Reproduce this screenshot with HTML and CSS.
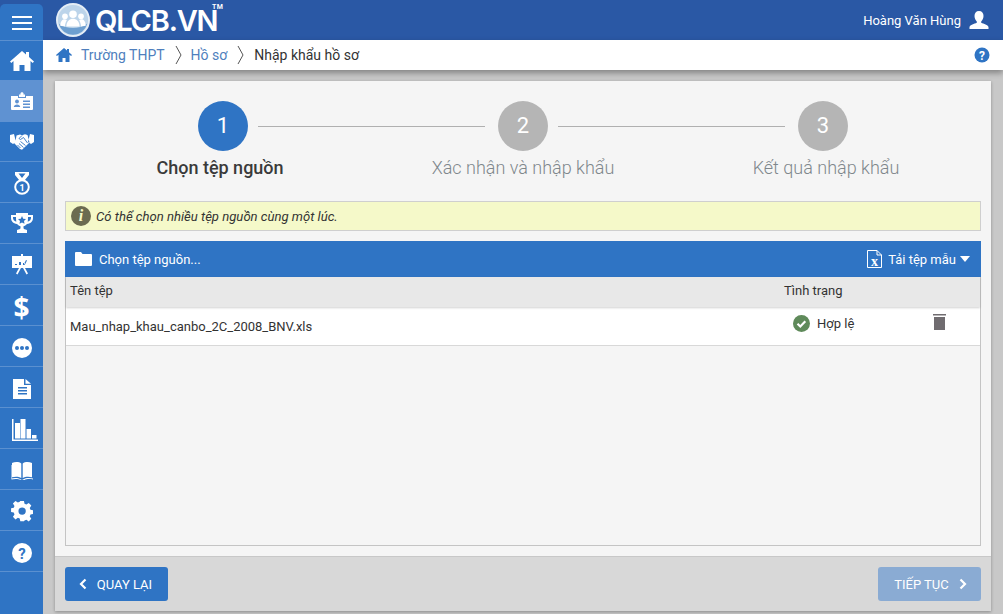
FILE: index.html
```html
<!DOCTYPE html>
<html lang="vi">
<head>
<meta charset="utf-8">
<title>Nhập khẩu hồ sơ</title>
<link rel="stylesheet" href="styles.css">
</head>
<body>
<div class="app">
  <aside class="sidebar">
   <div class="side-list">
    <a class="side-item side-menu"><svg viewBox="0 0 20 14" width="20" height="14"><path d="M0 1h20M0 7h20M0 13h20" stroke="#fff" stroke-width="2"/></svg></a>
    <a class="side-item side-home"><svg viewBox="0 0 24 20" width="24" height="20"><path fill="#fff" d="M12 0 0 10.500l1.300 1.400L3.500 10v10h6v-6h5v6h6V10l2.200 1.900 1.300-1.400-5-4.400V1h-3v2.500z"/></svg></a>
    <a class="side-item active"><svg viewBox="0 0 22 18" width="22" height="18"><path fill="#fff" d="M8 2.500h1.500V1L11 0l1.500 1v1.500H14V5H8zM0 4h7v2h8V4h7v13a1 1 0 0 1-1 1H1a1 1 0 0 1-1-1z"/><circle cx="6" cy="9.500" r="1.900" fill="#5f92d2"/><path fill="#5f92d2" d="M2.800 15c0-3.500 6.400-3.500 6.400 0zM12 8.500h7V10h-7zM12 11.500h7V13h-7zM12 14.500h7V16h-7z"/></svg></a>
    <a class="side-item side-shake"><svg viewBox="0 0 24 17" width="24" height="17"><path fill="#fff" d="M0 2 4 1l2 8-3 2-3-2zM24 2l-4-1-2 8 3 2 3-2zM6.500 2.500 10 1.500l2 .7 3-1 2.500.8 2 7.500-3 3-4.500 4.300-2-.8-6-6 1.500-1.500z"/><path d="M12 2.500 9 5.500l1.500 1 3-2 4 5.500M10.500 8.500l5 4M9 10.500l4.500 4M7.500 12l3 3" fill="none" stroke="#2f74c4" stroke-width=".9"/></svg></a>
    <a class="side-item side-medal"><svg viewBox="0 0 16 23" width="16" height="23"><path fill="#fff" fill-rule="evenodd" d="M1 0h14v3l-4.500 5.500h-5L1 3zm3.500 1.500L8 6l3.500-4.500z"/><circle cx="8" cy="15" r="6.800" fill="none" stroke="#fff" stroke-width="2"/><text x="8" y="18.500" class="medal-num">1</text></svg></a>
    <a class="side-item"><svg viewBox="0 0 22 20" width="22" height="20"><path fill="#fff" fill-rule="evenodd" d="M5 0h12v2h5v3c0 3-2 5.500-6 6-1 1.300-2.500 2-3.500 2.300V15c0 1 1.500 1.500 3.500 2v3H6v-3c2-.5 3.500-1 3.500-2v-1.700C8.500 13 7 12.300 6 11c-4-.5-6-3-6-6V2h5zM2 4v1c0 1.500 1 3 3.300 3.700C5 7 5 5.500 5 4zm18 0h-3c0 1.500 0 3-.3 4.700C19 8 20 6.500 20 5zm-9-1-1.200 2.700-2.800.3 2 2-.5 2.800 2.500-1.400 2.500 1.400L13 8l2-2-2.800-.3z"/></svg></a>
    <a class="side-item"><svg viewBox="0 0 20 21" width="20" height="21"><path fill="#fff" fill-rule="evenodd" d="M9 0h2v2h9v12h-7l3 5.500-1.500 1L11 14H9l-3.500 6.500L4 19.500 7 14H0V2h9zM3 10v1h2v-1zm4-2v3h2V8zm4 1v2h2V9zm3-3-2 4 1 .5 2-4z"/></svg></a>
    <a class="side-item side-low"><span class="dollar">$</span></a>
    <a class="side-item side-low"><svg viewBox="0 0 20 20" width="20" height="20"><circle cx="10" cy="10" r="10" fill="#fff"/><circle cx="5" cy="10" r="2" fill="#2f74c4"/><circle cx="10" cy="10" r="2" fill="#2f74c4"/><circle cx="15" cy="10" r="2" fill="#2f74c4"/></svg></a>
    <a class="side-item side-low"><svg viewBox="0 0 18 20" width="18" height="20"><path fill="#fff" fill-rule="evenodd" d="M0 0h11v6h7v14H0zm12.500 0L18 4.800h-5.500zM5 8v1.500h9V8zm0 3v1.500h9V11zm0 3v1.500h9V14z"/></svg></a>
    <a class="side-item side-low side-chart"><svg viewBox="0 0 26 22" width="26" height="22"><path fill="#fff" d="M0 0h1.500v20.500H26V22H0zM3 4h5v15.500H3zM8.500 0h5v19.500h-5zM14.500 10H19v9.500h-4.500zM20 16h4.500v3.500H20z"/></svg></a>
    <a class="side-item side-low"><svg viewBox="0 0 22 18" width="22" height="18"><path fill="#fff" d="M1 1c3-1.300 7-1.300 9.300.5V16C8 14.500 4 14.300 1 15.300zM21 1c-3-1.300-7-1.300-9.300.5V16c2.300-1.500 6.300-1.700 9.300-.7zM0 3v13.500c3-.8 7.500-.8 9.500.8l1.500.7 1.500-.7c2-1.600 6.500-1.600 9.500-.8V3h.5v14.500c-3-.8-7-.8-9 .5h-4c-2-1.300-6-1.300-9-.5V3z"/></svg></a>
    <a class="side-item side-low"><svg viewBox="0 0 22 22" width="22" height="22"><path fill="#fff" fill-rule="evenodd" d="M9 0h4l.6 3 2 .9 2.600-1.700 2.800 2.800-1.700 2.600.8 2 2.900.6v4l-2.900.6-.8 2 1.700 2.600-2.800 2.800-2.600-1.700-2 .8L13 22H9l-.6-2.900-2-.8-2.600 1.700L1 17.200l1.700-2.600-.8-2L-1 12V8l2.900-.6.8-2L1 2.800 3.800 0l2.600 1.700 2-.8zM11 7a4 4 0 1 0 0 8 4 4 0 0 0 0-8z" transform="translate(1 0) scale(.92)"/></svg></a>
    <a class="side-item side-low"><svg viewBox="0 0 20 20" width="20" height="20"><circle cx="10" cy="10" r="10" fill="#fff"/><text x="10" y="15.500" class="help-num">?</text></svg></a>
   </div>
  </aside>

  <div class="main">
    <header class="topbar">
      <div class="logo">
        <svg class="logo-mark" viewBox="0 0 36 36" width="34" height="34">
          <circle cx="18" cy="18" r="17" fill="#bcd4ea" stroke="#e4edf6" stroke-width="2"/>
          <path d="M3 22a15.500 15.500 0 0 0 30 0c-9 6-21 6-30 0z" fill="#6d9fd0"/>
          <circle cx="18" cy="12" r="4" fill="#fff"/><circle cx="9.500" cy="14" r="3" fill="#fff"/><circle cx="26.500" cy="14" r="3" fill="#fff"/>
          <path fill="#fff" d="M11 25c0-11 14-11 14 0zM4.500 24c0-7 5-8 7-6-1 2-2 4-2 7zM31.500 24c0-7-5-8-7-6 1 2 2 4 2 7z"/>
        </svg>
        <span class="logo-text">QLCB.VN</span><span class="logo-tm">TM</span>
      </div>
      <div class="user">
        <span>Hoàng Văn Hùng</span>
        <svg viewBox="0 0 20 18" width="20" height="18"><path fill="#fff" d="M10 0c3 0 4.500 2 4.500 5 0 2.500-1.200 4.500-2.300 5.500v1.300c2.500 1 6.800 2 7.300 4.200v2H.5v-2c.5-2.200 4.800-3.200 7.300-4.200v-1.300C6.700 9.500 5.500 7.500 5.500 5 5.500 2 7 0 10 0z"/></svg>
      </div>
    </header>

    <nav class="crumbs">
      <svg class="crumb-home" viewBox="0 0 16 14" width="16" height="14"><path fill="#2f74c4" d="M8 0 0 7l.9 1L2.500 6.700V14h4v-4h3v4h4V6.700L15.100 8l.9-1-3-2.700V1h-2v1.500z"/></svg>
      <a class="crumb-link">Trường THPT</a>
      <svg class="crumb-sep" viewBox="0 0 8 20" width="8" height="20"><path d="M1 1l5 9-5 9" fill="none" stroke="#555" stroke-width="1"/></svg>
      <a class="crumb-link">Hồ sơ</a>
      <svg class="crumb-sep" viewBox="0 0 8 20" width="8" height="20"><path d="M1 1l5 9-5 9" fill="none" stroke="#555" stroke-width="1"/></svg>
      <span class="crumb-current">Nhập khẩu hồ sơ</span>
      <svg class="crumb-help" viewBox="0 0 16 16" width="16" height="16"><circle cx="8" cy="8" r="7.500" fill="#2f74c4"/><text x="8" y="12.500" class="crumb-help-num">?</text></svg>
    </nav>

    <div class="content">
      <section class="panel">
        <div class="panel-body">
          <div class="steps">
            <div class="step current">
              <div class="step-track"><span class="step-num">1</span><span class="step-line"></span></div>
              <div class="step-label step-label-first">Chọn tệp nguồn</div>
            </div>
            <div class="step">
              <div class="step-track"><span class="step-num">2</span><span class="step-line"></span></div>
              <div class="step-label">Xác nhận và nhập khẩu</div>
            </div>
            <div class="step">
              <div class="step-track"><span class="step-num">3</span></div>
              <div class="step-label step-label-last">Kết quả nhập khẩu</div>
            </div>
          </div>

          <div class="notice">
            <span class="notice-icon">i</span>
            <em>Có thể chọn nhiều tệp nguồn cùng một lúc.</em>
          </div>

          <div class="file-bar">
            <div class="file-pick">
              <svg viewBox="0 0 17 14" width="17" height="14"><path fill="#fff" d="M0 1a1 1 0 0 1 1-1h5l1.500 2H16a1 1 0 0 1 1 1v10a1 1 0 0 1-1 1H1a1 1 0 0 1-1-1z"/></svg>
              <span>Chọn tệp nguồn...</span>
            </div>
            <div class="file-template">
              <svg viewBox="0 0 15 18" width="15" height="18"><path fill="none" stroke="#fff" d="M.5.500h9.500l4.500 4.500v12.500H.5zM10 .5V5h4.500"/><text x="7.500" y="15.500" class="xls-x">x</text></svg>
              <span>Tải tệp mẫu</span>
              <i class="caret"></i>
            </div>
          </div>

          <div class="file-table">
            <div class="table-head">
              <span class="col-name">Tên tệp</span>
              <span class="col-status">Tình trạng</span>
            </div>
            <div class="table-row">
              <span class="col-name">Mau_nhap_khau_canbo_2C_2008_BNV.xls</span>
              <span class="col-status row-status">
                <svg viewBox="0 0 17 17" width="17" height="17"><circle cx="8.500" cy="8.500" r="8.500" fill="#5f8a5a"/><path d="M4.500 8.800l2.800 2.700 5-5.200" fill="none" stroke="#fff" stroke-width="2.200"/></svg>
                <span>Hợp lệ</span>
              </span>
              <svg class="trash" viewBox="0 0 13 16" width="13" height="16"><path fill="#706c70" d="M0 0h13v1.500H0zM1 3h11v13H1z"/></svg>
            </div>
          </div>
        </div>

        <footer class="panel-foot">
          <a class="btn btn-back"><svg viewBox="0 0 8 12" width="8" height="12"><path d="M6.500 1.500 2 6l4.500 4.500" fill="none" stroke="#fff" stroke-width="2.200"/></svg><span>QUAY LẠI</span></a>
          <a class="btn btn-next"><span>TIẾP TỤC</span><svg viewBox="0 0 8 12" width="8" height="12"><path d="M1.500 1.500 6 6l-4.500 4.500" fill="none" stroke="#fff" stroke-width="2.200"/></svg></a>
        </footer>
      </section>
    </div>
  </div>
</div>
</body>
</html>
```

FILE: styles.css
```css
* { box-sizing: border-box; }
html, body { margin: 0; height: 100%; overflow: hidden; }
body { font-family: Roboto, "Noto Sans", sans-serif; font-size: 13px; color: #333; background: #c8c8c8; }
.app { display: flex; width: 1003px; height: 614px; }

.sidebar { width: 43px; flex: none; background: #2a58a5; padding-top: 4px; display: flex; position: relative; z-index: 3; }
.side-list { flex: 1; min-width: 0; background: #2f74c4; border-radius: 5px 5px 0 0; display: flex; flex-direction: column; overflow: hidden; }
.side-item { height: 41px; flex: none; display: flex; align-items: center; justify-content: center; border-bottom: 1px solid #5a90d0; }
.side-menu { height: 37px; padding-top: 2px; }
.side-home { height: 39px; border-bottom: 0; }
.side-shake { height: 40px; }
.side-medal { padding-top: 3px; }
.side-low { padding-top: 3px; }
.side-chart svg { margin-left: 6px; }
.side-item.active { height: 42px; background: #5f92d2; border-bottom-color: #5f92d2; }
.dollar { color: #fff; font: 700 28px "Open Sans", sans-serif; line-height: 1; }
.medal-num { font: 700 9px Roboto, sans-serif; fill: #fff; text-anchor: middle; }
.help-num { font: 700 15px Roboto, sans-serif; fill: #2f74c4; text-anchor: middle; }

.main { flex: 1; min-width: 0; display: flex; flex-direction: column; }
.topbar { height: 40px; flex: none; background: #2a58a5; display: flex; align-items: center; justify-content: space-between; padding: 0 14px 0 13px; }
.logo { display: flex; align-items: center; position: relative; }
.logo-mark { flex: none; }
.logo-text { color: #fff; font: 600 29px/21px Inter, Roboto, sans-serif; margin-left: 5px; letter-spacing: -1.2px; }
.logo-tm { color: #fff; font: 700 7px/6px Roboto, sans-serif; position: absolute; left: 156px; top: 1px; letter-spacing: .3px; }
.user { display: flex; align-items: center; gap: 8px; color: #fff; font-size: 13px; }

.crumbs { height: 30px; flex: none; background: #fff; display: flex; align-items: center; padding: 0 13px; box-shadow: 0 3px 6px rgba(0,0,0,.35); position: relative; z-index: 2; font-size: 14px; }
.crumb-home { margin-right: 9px; }
.crumb-link { color: #4f7fbd; }
.crumb-sep { margin: 0 8px 0 10px; }
.crumb-current { color: #333; margin-left: 1px; }
.crumb-help { margin-left: auto; }
.crumb-help-num { font: 700 12px Roboto, sans-serif; fill: #fff; text-anchor: middle; }

.content { flex: 1; min-height: 0; padding: 11px 12px 3px; }
.panel { height: 100%; background: #f5f5f5; display: flex; flex-direction: column; box-shadow: 0 1px 3px rgba(0,0,0,.3); }
.panel-body { flex: 1; min-height: 0; display: flex; flex-direction: column; padding: 20px 10px 10px; }

.steps { display: flex; padding-left: 8px; height: 100px; flex: none; }
.step { width: 300px; flex: none; text-align: center; }
.step-track { height: 50px; display: flex; justify-content: center; position: relative; }
.step-num { width: 50px; height: 50px; border-radius: 50%; background: #b5b5b5; color: #fff; font-size: 22px; line-height: 50px; }
.step.current .step-num { background: #2f74c4; }
.step-line { position: absolute; left: 185px; width: 227px; top: 25px; height: 1px; background: #b0b0b0; }
.step-label { font-size: 18px; font-weight: 300; line-height: 24px; margin-top: 5px; color: #7f878c; }
.step.current .step-label { color: #3a3a3a; font-weight: 500; }
.step-label-first { margin-left: -6px; }
.step-label-last { margin-left: 6px; }

.notice { height: 30px; flex: none; background: #f5f9c9; border: 1px solid #cfcfcf; display: flex; align-items: center; gap: 5px; padding-left: 5px; color: #333; font-size: 13.1px; }
.notice-icon { width: 20px; height: 20px; border-radius: 50%; background: #6b6b50; color: #f5f9c9; font: italic 700 16px/20px "Liberation Serif", serif; text-align: center; }

.file-bar { height: 36px; flex: none; margin-top: 10px; background: #2f74c4; color: #fff; display: flex; align-items: center; justify-content: space-between; padding: 0 11px 0 10px; font-size: 13px; }
.file-pick { display: flex; align-items: center; gap: 7px; }
.file-template { display: flex; align-items: center; gap: 6px; }
.caret { width: 0; height: 0; border: 5px solid transparent; border-top: 6px solid #fff; border-bottom: 0; margin-left: -2px; }
.xls-x { font: 700 14px "Liberation Serif", serif; fill: #fff; text-anchor: middle; }

.file-table { flex: 1; min-height: 0; background: #f5f5f5; border: 1px solid #c4c4c4; border-top: 0; display: flex; flex-direction: column; }
.table-head { height: 30px; flex: none; background: #e8e8e8; display: flex; align-items: center; padding: 0 0 3px 4px; position: relative; box-shadow: 0 1px 2px rgba(0,0,0,.18); font-size: 13px; }
.table-row { height: 39px; flex: none; background: #fff; border-bottom: 1px solid #d8d8d8; display: flex; align-items: center; padding-left: 4px; font-size: 13px; }
.col-name { width: 714px; flex: none; }
.col-status { flex: none; }
.row-status { display: flex; align-items: center; gap: 7px; margin-left: 9px; margin-top: -5px; font-size: 13px; width: 140px; }
.trash { margin-top: -8px; }

.panel-foot { height: 55px; flex: none; background: #d8d8d8; border-top: 1px solid #c8c8c8; display: flex; align-items: center; justify-content: space-between; padding: 0 10px; }
.btn { height: 34px; width: 103px; background: #2f74c4; color: #fff; border-radius: 3px; display: flex; align-items: center; justify-content: center; gap: 10px; font-size: 13px; }
.btn-back { padding-right: 2px; }
.btn-next { padding-left: 2px; background: #8aabd3; }
```
